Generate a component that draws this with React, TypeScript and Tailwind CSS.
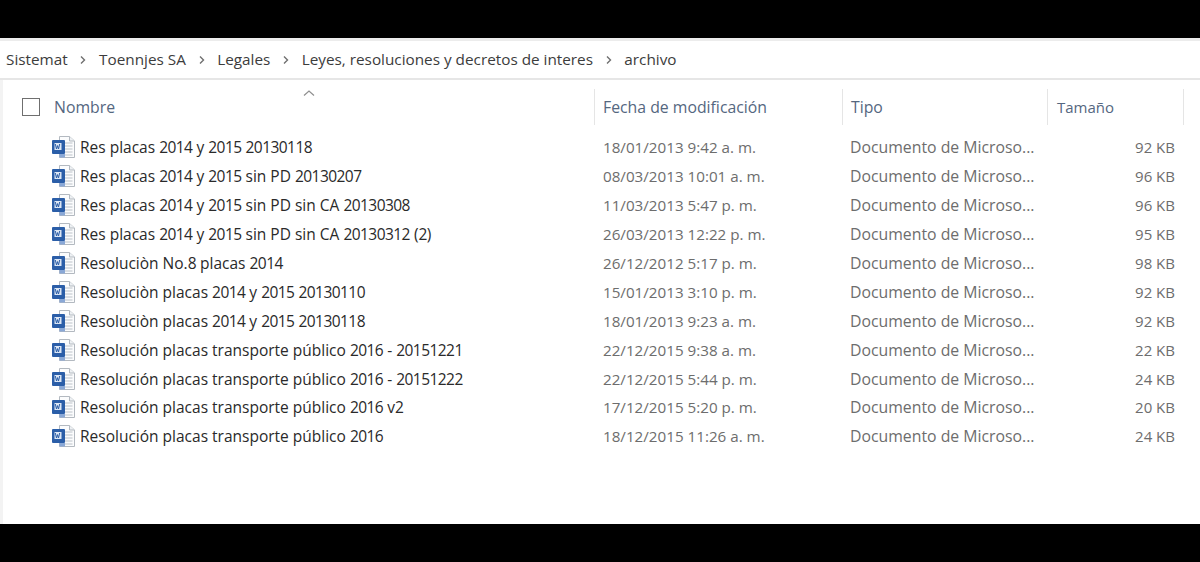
const rows = [
  ["Res placas 2014 y 2015 20130118", "18/01/2013 9:42 a. m.", "92 KB"],
  ["Res placas 2014 y 2015 sin PD 20130207", "08/03/2013 10:01 a. m.", "96 KB"],
  ["Res placas 2014 y 2015 sin PD sin CA 20130308", "11/03/2013 5:47 p. m.", "96 KB"],
  ["Res placas 2014 y 2015 sin PD sin CA 20130312 (2)", "26/03/2013 12:22 p. m.", "95 KB"],
  ["Resoluciòn No.8 placas 2014", "26/12/2012 5:17 p. m.", "98 KB"],
  ["Resoluciòn placas 2014 y 2015 20130110", "15/01/2013 3:10 p. m.", "92 KB"],
  ["Resoluciòn placas 2014 y 2015 20130118", "18/01/2013 9:23 a. m.", "92 KB"],
  ["Resolución placas transporte público 2016 - 20151221", "22/12/2015 9:38 a. m.", "22 KB"],
  ["Resolución placas transporte público 2016 - 20151222", "22/12/2015 5:44 p. m.", "24 KB"],
  ["Resolución placas transporte público 2016 v2", "17/12/2015 5:20 p. m.", "20 KB"],
  ["Resolución placas transporte público 2016", "18/12/2015 11:26 a. m.", "24 KB"],
];

const crumbs = ["Sistemat", "Toennjes SA", "Legales", "Leyes, resoluciones y decretos de interes", "archivo"];

function NameText({ text }: { text: string }) {
  const parts = text.split(/(\d+)/);
  return (
    <span>
      {parts.map((p, i) =>
        i % 2 === 1 ? (
          <span key={i} className="tracking-[-0.55px]">{p}</span>
        ) : (
          <span key={i}>{p}</span>
        )
      )}
    </span>
  );
}

function WordIcon() {
  return (
    <svg width="25" height="24" viewBox="0 0 25 24" className="shrink-0">
      <path d="M8.5 1.5h10l5 4.5v16.5h-15z" fill="#fbfcfd" stroke="#b3b9c0" strokeWidth="1" />
      <path d="M18.5 1.5V6h5" fill="#eef1f4" stroke="#b3b9c0" strokeWidth="1" />
      <path d="M14 8h7.5M14 11h7.5M14 14h7.5M14 17h7.5M14 20h7.5" stroke="#bcc2c9" strokeWidth="1" />
      <rect x="1" y="5" width="13" height="14" rx="1" fill="#2b5ea8" />
      <rect x="3.5" y="8" width="7" height="7" fill="#dbe6f5" />
      <path d="M4.3 9l1.2 5 1-3.4 1 3.4 1.2-5" fill="none" stroke="#2b5ea8" strokeWidth="1" />
      <rect x="8.5" y="19" width="5.5" height="3.5" fill="#8aa8d6" />
    </svg>
  );
}

function Chevron() {
  return (
    <svg width="8" height="10" viewBox="0 0 8 10" className="shrink-0">
      <path d="M2 1.5L5.5 5 2 8.5" fill="none" stroke="#6f6f6f" strokeWidth="1.4" />
    </svg>
  );
}

const gridCols = "grid grid-cols-[594px_248px_205px_137px]";

export default function App() {
  return (
    <div className="w-[1200px] h-[562px] bg-black flex flex-col overflow-hidden font-['Open_Sans','Noto_Sans',sans-serif]">
      <div className="h-[38px] shrink-0" />
      <div className="h-[3px] shrink-0 bg-[#ececec]" />
      <div className="h-[39px] shrink-0 bg-white border-b-2 border-[#e6e6e6] flex items-center pl-[6px] text-[15.3px] text-[#3c3c3c]">
        {crumbs.map((c, i) => (
          <div key={c} className="flex items-center">
            {i > 0 && <span className="mx-[11.7px] flex"><Chevron /></span>}
            <span>{c}</span>
          </div>
        ))}
      </div>
      <div className="h-[444px] shrink-0 bg-white border-l-[3px] border-[#f3f3f3] flex flex-col relative">
        <svg width="14" height="8" viewBox="0 0 14 8" className="absolute left-[299px] top-[9px]">
          <path d="M2 6.5L7 2l5 4.5" fill="none" stroke="#8f8f8f" strokeWidth="1.2" />
        </svg>
        <div className={`${gridCols} h-[36px] mt-[9px] -ml-[3px] text-[15.8px] text-[#55677f]`}>
          <div className="flex items-center pl-[22px]">
            <span className="w-[18px] h-[18px] border border-[#6f6f6f] mr-[14px]" />
            <span className="pt-[2px]">Nombre</span>
          </div>
          <div className="flex items-center pl-[8px] pt-[2px] border-l border-[#e5e5e5]">Fecha de modificación</div>
          <div className="flex items-center pl-[8px] pt-[2px] border-l border-[#e5e5e5]">Tipo</div>
          <div className="flex items-center pl-[9px] border-l border-[#e5e5e5] border-r text-[15px]">Tamaño</div>
        </div>
        <div className="flex flex-col mt-[8px] -ml-[3px]">
          {rows.map(([name, date, size]) => (
            <div key={name} className={`${gridCols} h-[28.9px] items-center text-[15.5px] leading-[20px]`}>
              <div className="flex items-center pl-[51px] text-[#2a2a2a] whitespace-nowrap">
                <WordIcon />
                <span className="ml-[4px]"><NameText text={name} /></span>
              </div>
              <div className="pl-[9px] text-[15.2px] leading-[20px] text-[#6d6d6d] whitespace-nowrap">{date}</div>
              <div className="pl-[8px] text-[15.8px] leading-[20px] text-[#6d6d6d] whitespace-nowrap">Documento de Microso...</div>
              <div className="pr-[9px] text-right text-[15px] leading-[20px] text-[#6d6d6d] whitespace-nowrap">{size}</div>
            </div>
          ))}
        </div>
      </div>
    </div>
  );
}
